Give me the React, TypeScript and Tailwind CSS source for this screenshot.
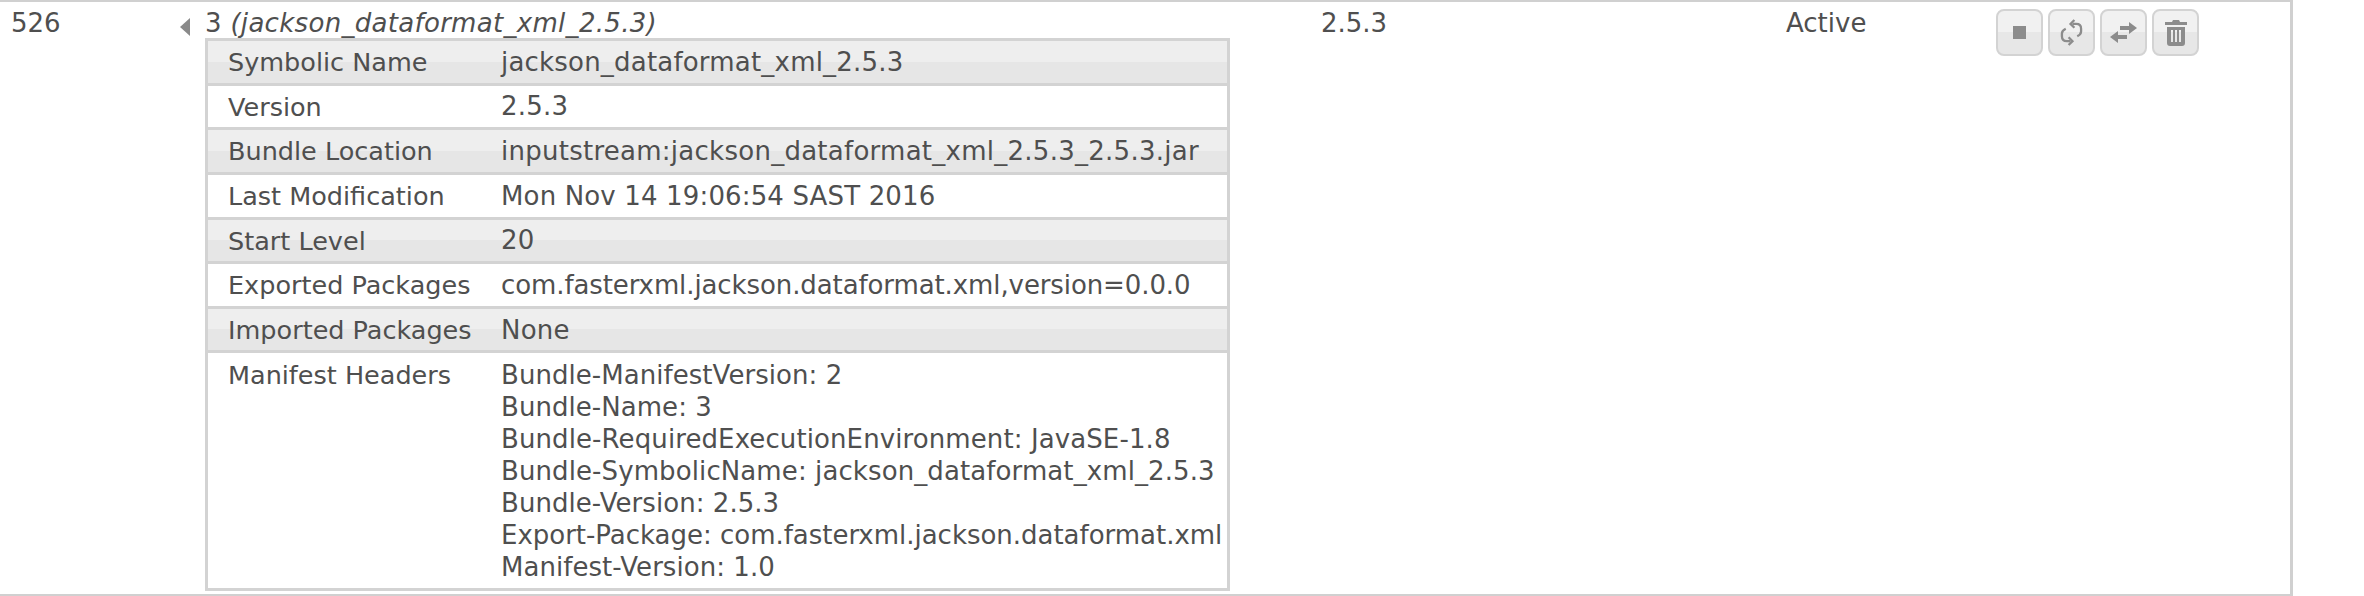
import type { ReactNode } from "react";

const details = [
  { label: "Symbolic Name", value: "jackson_dataformat_xml_2.5.3", spacing: "tracking-[0.2px]" },
  { label: "Version", value: "2.5.3", spacing: "tracking-[0.2px]" },
  { label: "Bundle Location", value: "inputstream:jackson_dataformat_xml_2.5.3_2.5.3.jar", spacing: "tracking-[0.26px]" },
  { label: "Last Modification", value: "Mon Nov 14 19:06:54 SAST 2016", spacing: "tracking-[0.15px]" },
  { label: "Start Level", value: "20", spacing: "tracking-[0.2px]" },
  { label: "Exported Packages", value: "com.fasterxml.jackson.dataformat.xml,version=0.0.0", spacing: "tracking-[-0.1px]" },
  { label: "Imported Packages", value: "None", spacing: "tracking-[0.2px]" },
];

const headers = [
  { text: "Bundle-ManifestVersion: 2", spacing: "tracking-[0.05px]" },
  { text: "Bundle-Name: 3", spacing: "tracking-[0.05px]" },
  { text: "Bundle-RequiredExecutionEnvironment: JavaSE-1.8", spacing: "tracking-[0.1px]" },
  { text: "Bundle-SymbolicName: jackson_dataformat_xml_2.5.3", spacing: "tracking-[0.1px]" },
  { text: "Bundle-Version: 2.5.3", spacing: "tracking-[0.05px]" },
  { text: "Export-Package: com.fasterxml.jackson.dataformat.xml", spacing: "tracking-[-0.02px]" },
  { text: "Manifest-Version: 1.0", spacing: "tracking-[0.05px]" },
];

function ActionButton({ children }: { children: ReactNode }) {
  return (
    <button className="flex h-[47px] w-[47px] items-center justify-center rounded-lg border-2 border-[#d3d3d3] bg-[linear-gradient(#f1f1f1_50%,#e7e7e7_50%)]">
      {children}
    </button>
  );
}

export default function App() {
  return (
    <div className="h-[596px] w-[2364px] overflow-hidden bg-white font-['DejaVu_Sans',sans-serif] text-[26px] text-[#4f4f4f]">
      <div className="flex h-[596px] w-[2293px] border-y-2 border-r-[3px] border-[#d0d0d0]">
        <div className="w-[180px] pl-[11px] pt-[5px] leading-[32px]">526</div>
        <div className="flex w-[25px] justify-start pt-[16px]">
          <svg width="10" height="18" viewBox="0 0 10 18" className="fill-[#8a8a8a]">
            <path d="M10 0 L0 9 L10 18 Z" />
          </svg>
        </div>
        <div className="w-[1116px]">
          <div className="h-[36px] whitespace-nowrap pt-[5px] leading-[32px] tracking-[0.3px]">
            3 <i>(jackson_dataformat_xml_2.5.3)</i>
          </div>
          <div className="w-[1025px] border-[3px] border-[#d3d3d3]">
            {details.map((row, i) => (
              <div
                key={row.label}
                className={`flex h-[44.65px] items-center border-b-[3px] border-[#d3d3d3] pl-[20px] pt-[1px] ${
                  i % 2 === 0 ? "bg-[linear-gradient(#eeeeee_50%,#e6e6e6_50%)]" : "bg-white"
                }`}
              >
                <div className="w-[273px] shrink-0 text-[25.5px]">{row.label}</div>
                <div className={`whitespace-nowrap ${row.spacing}`}>{row.value}</div>
              </div>
            ))}
            <div className="flex pb-[5px] pl-[20px] pt-[6px] leading-[32px]">
              <div className="w-[273px] shrink-0 text-[25.5px]">Manifest Headers</div>
              <div className="whitespace-nowrap">
                {headers.map((line) => (
                  <div key={line.text} className={line.spacing}>
                    {line.text}
                  </div>
                ))}
              </div>
            </div>
          </div>
        </div>
        <div className="w-[465px] pt-[5px] leading-[32px]">2.5.3</div>
        <div className="w-[210px] pt-[5px] leading-[32px]">Active</div>
        <div className="flex gap-[5px] pt-[7px]">
          <ActionButton>
            <div className="h-[13px] w-[13px] bg-[#8c8c8c]" />
          </ActionButton>
          <ActionButton>
            <svg width="23" height="27" viewBox="0 0 24 28" fill="none" stroke="#8c8c8c" strokeWidth="2.4">
              <path d="M13 5 H17 Q22 5 22 10 V13 Q22 16 18 18" />
              <path d="M15 1 L11 5 L15 9" />
              <path d="M11 23 H7 Q2 23 2 18 V15 Q2 12 6 10" />
              <path d="M9 19 L13 23 L9 27" />
            </svg>
          </ActionButton>
          <ActionButton>
            <svg width="27" height="21" viewBox="0 0 27 21" fill="#8c8c8c">
              <path d="M10 4 H19 V0 L27 6 L19 12 V8 H10 Z" />
              <path d="M17 13 H8 V9 L0 15 L8 21 V17 H17 Z" />
            </svg>
          </ActionButton>
          <ActionButton>
            <svg width="24" height="26" viewBox="0 0 24 26" fill="#8c8c8c">
              <path d="M9 0 H15 L16 2 H23 V5 H1 V2 H8 Z" />
              <path d="M3 7 H21 V23 Q21 26 18 26 H6 Q3 26 3 23 Z M7 10 V22 H9 V10 Z M11 10 V22 H13 V10 Z M15 10 V22 H17 V10 Z" fillRule="evenodd" />
            </svg>
          </ActionButton>
        </div>
      </div>
    </div>
  );
}
